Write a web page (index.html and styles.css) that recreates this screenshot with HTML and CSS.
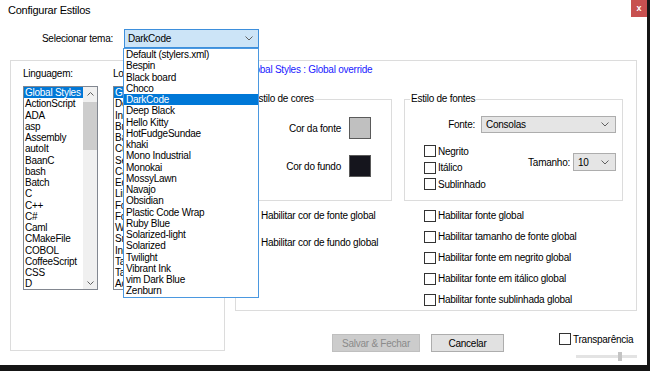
FILE: index.html
```html
<!DOCTYPE html>
<html lang="pt">

<head>
  <meta charset="utf-8">
  <link rel="stylesheet" href="styles.css">
</head>

<body>
  <div class="dialog">
    <div class="titleBar">
      <span class="title">Configurar Estilos</span>
      <span class="closeBtn">x</span>
    </div>

    <div class="themeRow">
      <span class="themeLabel">Selecionar tema:</span>
      <div class="themePicker">
        <div class="themeSelect">
          <span>DarkCode</span>
          <svg class="chev" width="8" height="5" viewBox="0 0 8 5"><path d="M0.5 0.5 L4 4 L7.5 0.5" /></svg>
        </div>
        <ul class="themeList">
          <li>Default (stylers.xml)</li>
          <li>Bespin</li>
          <li>Black board</li>
          <li>Choco</li>
          <li class="sel">DarkCode</li>
          <li>Deep Black</li>
          <li>Hello Kitty</li>
          <li>HotFudgeSundae</li>
          <li>khaki</li>
          <li>Mono Industrial</li>
          <li>Monokai</li>
          <li>MossyLawn</li>
          <li>Navajo</li>
          <li>Obsidian</li>
          <li>Plastic Code Wrap</li>
          <li>Ruby Blue</li>
          <li>Solarized-light</li>
          <li>Solarized</li>
          <li>Twilight</li>
          <li>Vibrant Ink</li>
          <li>vim Dark Blue</li>
          <li>Zenburn</li>
        </ul>
      </div>
    </div>

    <div class="content">
      <div class="groupBox leftGroup">
        <div class="listCol">
          <div class="listLabel">Linguagem:</div>
          <div class="listBox langList">
            <ul>
              <li class="sel">Global Styles</li>
              <li>ActionScript</li>
              <li>ADA</li>
              <li>asp</li>
              <li>Assembly</li>
              <li>autoIt</li>
              <li>BaanC</li>
              <li>bash</li>
              <li>Batch</li>
              <li>C</li>
              <li>C++</li>
              <li>C#</li>
              <li>Caml</li>
              <li>CMakeFile</li>
              <li>COBOL</li>
              <li>CoffeeScript</li>
              <li>CSS</li>
              <li>D</li>
            </ul>
            <div class="scrollBar">
              <div class="arrow">
                <svg class="chev" width="7" height="4" viewBox="0 0 7 4"><path d="M0.5 3.5 L3.5 0.5 L6.5 3.5" /></svg>
              </div>
              <div class="thumb"></div>
              <div class="track"></div>
              <div class="arrow">
                <svg class="chev" width="7" height="4" viewBox="0 0 7 4"><path d="M0.5 0.5 L3.5 3.5 L6.5 0.5" /></svg>
              </div>
            </div>
          </div>
        </div>
        <div class="listCol">
          <div class="listLabel">Localizar estilo:</div>
          <div class="listBox styleList">
            <ul>
              <li class="sel">Global override</li>
              <li>Default Style</li>
              <li>Indent guideline</li>
              <li>Brace highlight</li>
              <li>Bad brace</li>
              <li>Current line</li>
              <li>Selected text</li>
              <li>Caret colour</li>
              <li>Edge colour</li>
              <li>Line number</li>
              <li>Fold</li>
              <li>Fold margin</li>
              <li>White space</li>
              <li>Smart HighLight</li>
              <li>Incremental</li>
              <li>Tags match</li>
              <li>Tags attribute</li>
              <li>Active tab</li>
            </ul>
          </div>
        </div>
      </div>

      <div class="rightCol">
        <div class="groupBox rightGroup">
          <div class="styleTitle">Global Styles : Global override</div>

          <div class="subGroups">
            <fieldset class="colorGroup">
              <legend>Estilo de cores</legend>
              <div class="colorRow first">
                <span>Cor da fonte</span>
                <span class="swatch fgColor"></span>
              </div>
              <div class="colorRow">
                <span>Cor do fundo</span>
                <span class="swatch bgColor"></span>
              </div>
            </fieldset>

            <fieldset class="fontGroup">
              <legend>Estilo de fontes</legend>
              <div class="fontRow">
                <span>Fonte:</span>
                <div class="combo fontCombo">
                  <span>Consolas</span>
                  <svg class="chev" width="8" height="5" viewBox="0 0 8 5"><path d="M0.5 0.5 L4 4 L7.5 0.5" /></svg>
                </div>
              </div>
              <div class="fontOpts">
                <div class="checks">
                  <div class="check"><span class="box"></span>Negrito</div>
                  <div class="check"><span class="box"></span>Itálico</div>
                  <div class="check"><span class="box"></span>Sublinhado</div>
                </div>
                <div class="sizeRow">
                  <span>Tamanho:</span>
                  <div class="combo sizeCombo">
                    <span>10</span>
                    <svg class="chev" width="8" height="5" viewBox="0 0 8 5"><path d="M0.5 0.5 L4 4 L7.5 0.5" /></svg>
                  </div>
                </div>
              </div>
            </fieldset>
          </div>

          <div class="globalOpts">
            <div class="optCol leftOpts">
              <div class="check"><span class="box"></span>Habilitar cor de fonte global</div>
              <div class="check"><span class="box"></span>Habilitar cor de fundo global</div>
            </div>
            <div class="optCol rightOpts">
              <div class="check"><span class="box"></span>Habilitar fonte global</div>
              <div class="check"><span class="box"></span>Habilitar tamanho de fonte global</div>
              <div class="check"><span class="box"></span>Habilitar fonte em negrito global</div>
              <div class="check"><span class="box"></span>Habilitar fonte em itálico global</div>
              <div class="check"><span class="box"></span>Habilitar fonte sublinhada global</div>
            </div>
          </div>
        </div>

        <div class="footer">
          <button class="btn saveBtn" disabled>Salvar &amp; Fechar</button>
          <button class="btn cancelBtn">Cancelar</button>
          <div class="transp">
            <div class="check"><span class="box"></span>Transparência</div>
            <div class="slider">
              <div class="sliderThumb"></div>
            </div>
          </div>
        </div>
      </div>
    </div>
  </div>
</body>

</html>
```

FILE: styles.css
```css
body {
  margin: 0;
  padding: 0;
  width: 650px;
  height: 371px;
  overflow: hidden;
  background: #151515;
  font-family: "Liberation Sans", Arial, sans-serif;
  font-size: 10px;
  letter-spacing: -0.25px;
  color: #000;
}

ul {
  list-style: none;
  margin: 0;
  padding: 0;
}

.dialog {
  width: 647px;
  height: 365px;
  background: #fff;
}

.titleBar {
  display: flex;
  justify-content: space-between;
  height: 17px;
}

.title {
  font-size: 11px;
  line-height: 12px;
  padding: 4px 0 0 8px;
}

.closeBtn {
  width: 16px;
  height: 17px;
  background: #c75050;
  color: #fff;
  font-weight: bold;
  font-size: 9px;
  line-height: 16px;
  text-align: center;
}

.chev {
  display: block;
  fill: none;
  stroke: #606060;
  stroke-width: 1;
}

/* theme selector */

.themeRow {
  display: flex;
  align-items: center;
  margin-top: 12px;
}

.themeLabel {
  width: 113px;
  text-align: right;
  margin-right: 11px;
}

.themePicker {
  position: relative;
  width: 135px;
}

.themeSelect {
  box-sizing: border-box;
  height: 19px;
  display: flex;
  align-items: center;
  justify-content: space-between;
  padding: 0 5px 0 3px;
  background: #cce4f7;
  border: 1px solid #3d8fdc;
}

.themeList {
  position: absolute;
  left: -1px;
  top: 19px;
  z-index: 5;
  box-sizing: border-box;
  width: 136px;
  height: 250px;
  background: #fff;
  border: 1px solid #4b98e0;
}

.themeList li {
  line-height: 11.25px;
  padding-left: 2px;
  white-space: nowrap;
}

.themeList li.sel {
  background: #0078d7;
  color: #fff;
}

/* main area */

.content {
  display: flex;
  gap: 10px;
  margin-top: 12px;
  padding-left: 10px;
}

.groupBox {
  box-sizing: border-box;
  border: 1px solid #dcdcdc;
}

.leftGroup {
  width: 215px;
  height: 291px;
  display: flex;
  gap: 15px;
  padding: 7px 0 0 12px;
}

.listLabel {
  line-height: 12px;
  margin-bottom: 6px;
  white-space: nowrap;
}

.listBox {
  box-sizing: border-box;
  height: 204px;
  display: flex;
  overflow: hidden;
  border: 1px solid #828790;
}

.langList {
  width: 75px;
}

.styleList {
  width: 102px;
}

.listBox ul {
  flex: 1;
  overflow: hidden;
}

.listBox li {
  line-height: 11.25px;
  padding-left: 1px;
  white-space: nowrap;
}

.listBox li.sel {
  background: #0078d7;
  color: #fff;
}

.scrollBar {
  width: 14px;
  display: flex;
  flex-direction: column;
  background: #f0f0f0;
}

.scrollBar .arrow {
  height: 13px;
  display: flex;
  align-items: center;
  justify-content: center;
}

.scrollBar .thumb {
  height: 48px;
  margin-top: 2px;
  background: #cdcdcd;
}

.scrollBar .track {
  flex: 1;
}

/* right side */

.rightCol {
  width: 402px;
  display: flex;
  flex-direction: column;
}

.rightGroup {
  height: 251px;
  padding: 3px 0 0 9px;
}

.styleTitle {
  line-height: 12px;
  color: #1a1aff;
}

.subGroups {
  display: flex;
  gap: 12px;
  margin-top: 17px;
}

fieldset {
  box-sizing: border-box;
  margin: 0;
  padding: 0;
  min-width: 0;
  height: 108px;
  border: 1px solid #dcdcdc;
}

legend {
  padding: 0 1px;
  margin-left: 5px;
  line-height: 12px;
}

.colorGroup {
  width: 147px;
}

.colorRow {
  display: flex;
  align-items: center;
  justify-content: flex-end;
  gap: 8px;
  padding-right: 20px;
  margin-top: 16px;
}

.colorRow.first {
  margin-top: 12px;
}

.swatch {
  box-sizing: border-box;
  width: 22px;
  height: 22px;
  border: 1px solid #5a5a5a;
}

.fgColor {
  background: #c0c0c0;
}

.bgColor {
  background: #15151d;
}

.fontGroup {
  width: 219px;
}

.fontRow {
  display: flex;
  align-items: center;
  justify-content: flex-end;
  gap: 6px;
  padding-right: 6px;
  margin-top: 11px;
}

.combo {
  box-sizing: border-box;
  display: flex;
  align-items: center;
  justify-content: space-between;
  padding: 0 6px 0 4px;
  background: #e5e5e5;
  border: 1px solid #adadad;
}

.fontCombo {
  width: 135px;
  height: 17px;
}

.sizeCombo {
  width: 43px;
  height: 18px;
}

.fontOpts {
  display: flex;
  justify-content: space-between;
  padding: 0 6px 0 19px;
  margin-top: 10px;
}

.checks .check {
  height: 16.5px;
}

.sizeRow {
  display: flex;
  align-items: center;
  gap: 3px;
  margin-top: 10px;
  align-self: flex-start;
}

.check {
  display: flex;
  align-items: center;
  white-space: nowrap;
}

.box {
  box-sizing: border-box;
  width: 12px;
  height: 12px;
  margin-right: 2px;
  background: #fff;
  border: 1px solid #333;
}

.globalOpts {
  display: flex;
  margin-top: 4px;
}

.optCol {
  display: flex;
  flex-direction: column;
}

.optCol .check {
  height: 21px;
}

.leftOpts {
  width: 177px;
  padding-left: 2px;
  gap: 6px;
}

/* footer */

.footer {
  display: flex;
  align-items: flex-start;
  padding-top: 23px;
}

.btn {
  box-sizing: border-box;
  height: 18px;
  padding: 0;
  font-family: inherit;
  font-size: 10px;
  letter-spacing: -0.25px;
}

.saveBtn {
  width: 88px;
  margin-left: 97px;
  background: #cccccc;
  border: 1px solid #bfbfbf;
  color: #8a8a8a;
}

.cancelBtn {
  width: 73px;
  margin-left: 11px;
  background: #e1e1e1;
  border: 1px solid #adadad;
  color: #000;
}

.transp {
  margin-left: 55px;
  margin-top: -1px;
}

.slider {
  width: 61px;
  height: 9px;
  margin: 7px 0 0 17px;
  background: linear-gradient(#e3e3e3, #e3e3e3) center / 100% 3px no-repeat;
}

.sliderThumb {
  width: 4px;
  height: 9px;
  margin-left: 42px;
  background: #c4c4c4;
}
```
